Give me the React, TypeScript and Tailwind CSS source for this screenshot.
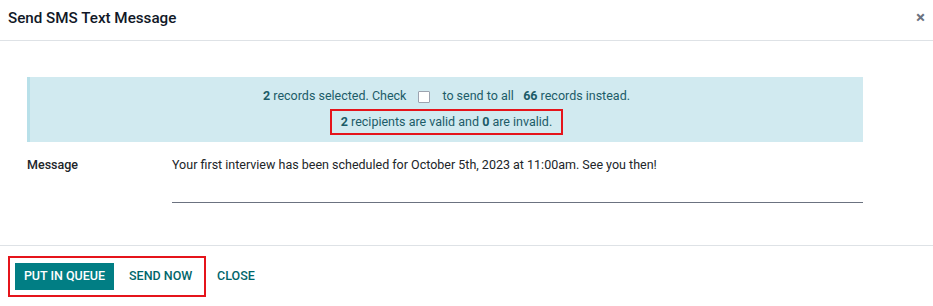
import React from "react";

export default function App() {
  return (
    <div className="w-[933px] h-[306px] bg-white flex flex-col text-[12.5px] text-[#212529]" style={{ fontFamily: "Roboto, 'Liberation Sans', sans-serif" }}>
      <div className="h-[41px] flex items-center justify-between pl-[8px] pr-[8px] border-b border-[#dee2e6] shrink-0">
        <div className="text-[15.2px] font-medium text-[#111827] leading-none mt-[-3px]">Send SMS Text Message</div>
        <div className="text-[#6b7280] text-[17px] leading-none mt-[-5px] font-bold">×</div>
      </div>
      <div className="flex-1 flex flex-col px-[27px] pt-[36px]">
        <div className="w-[836px] h-[65px] bg-[#d1eaf0] border-l-[3px] border-[#b8e0e9] flex flex-col items-center text-[#1c5c68] pt-[11px]">
          <div className="h-[17px] flex items-center whitespace-nowrap">
            <b className="font-bold">2</b>&nbsp;records selected. Check
            <span className="inline-block w-[12px] h-[12px] bg-white border border-[#9ca3af] mx-[12px] rounded-[1px]"></span>
            to send to all&nbsp;&nbsp;&nbsp;<b className="font-bold">66</b>&nbsp;records instead.
          </div>
          <div className="mt-[4px] h-[26px] border-2 border-[#e5141b] flex items-center px-[9px] whitespace-nowrap">
            <b className="font-bold">2</b>&nbsp;recipients are valid and&nbsp;<b className="font-bold">0</b>&nbsp;are invalid.
          </div>
        </div>
        <div className="flex mt-[13px]">
          <div className="w-[145px] font-medium text-[#212529] pt-[1px]">Message</div>
          <div className="w-[691px] h-[48px] border-b border-[#6b7280] pt-[1px] text-[#212529]">
            Your first interview has been scheduled for October 5th, 2023 at 11:00am. See you then!
          </div>
        </div>
      </div>
      <div className="h-[61px] border-t border-[#dee2e6] flex items-center pl-[8px] shrink-0">
        <div className="h-[41px] w-[198px] border-2 border-[#e5141b] flex items-center pl-[5px] shrink-0">
          <div className="h-[27px] w-[99px] justify-center bg-[#017e84] text-white font-medium flex items-center whitespace-nowrap shrink-0">PUT IN QUEUE</div>
          <div className="h-[27px] pl-[15px] text-[#01666b] font-medium flex items-center whitespace-nowrap shrink-0">SEND NOW</div>
        </div>
        <div className="ml-[11px] text-[#01666b] font-medium whitespace-nowrap">CLOSE</div>
      </div>
    </div>
  );
}
